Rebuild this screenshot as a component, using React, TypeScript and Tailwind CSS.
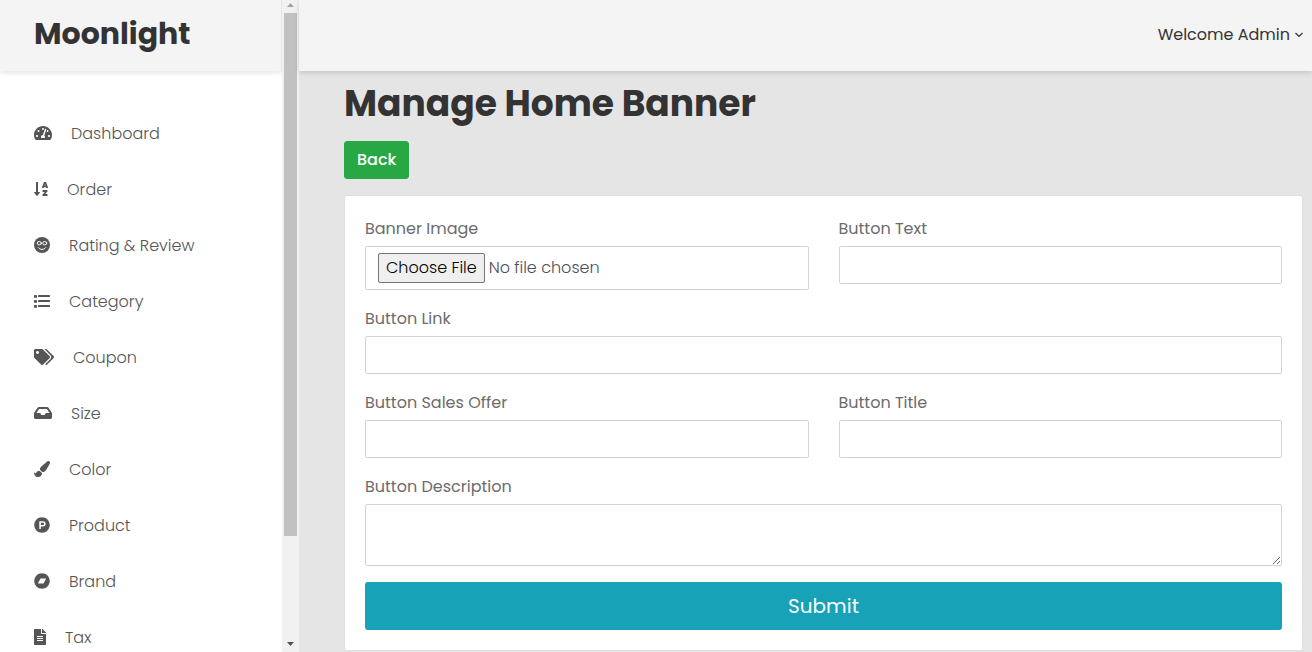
import type { ReactNode } from "react";
import {
  FaTachometerAlt,
  FaSortAlphaDown,
  FaTags,
  FaInbox,
  FaPaintBrush,
  FaProductHunt,
  FaBandcamp,
  FaFileAlt,
} from "react-icons/fa";

function ListIcon({ className }: { className?: string }) {
  return (
    <svg className={className} viewBox="0 0 16 16" fill="currentColor">
      <rect x="0" y="2" width="3" height="2.800" rx="0.400" />
      <rect x="0" y="7" width="3" height="2.800" rx="0.400" />
      <rect x="0" y="12" width="3" height="2.800" rx="0.400" />
      <rect x="4" y="2" width="12" height="2" rx="0.400" />
      <rect x="4" y="7" width="12" height="2" rx="0.400" />
      <rect x="4" y="12" width="12" height="2" rx="0.400" />
    </svg>
  );
}

function FaceIcon({ className }: { className?: string }) {
  return (
    <svg className={className} viewBox="0 0 16 16" fill="none">
      <circle cx="8" cy="8" r="8" fill="currentColor" />
      <g stroke="#fff" strokeWidth="1" strokeLinecap="round">
        <ellipse cx="5.300" cy="6.200" rx="2" ry="1.700" />
        <ellipse cx="10.700" cy="6.200" rx="2" ry="1.700" />
        <path d="M4.300 10.600c1.800 2.500 5.600 2.500 7.400 0" />
      </g>
    </svg>
  );
}

const menu = [
  { label: "Dashboard", icon: FaTachometerAlt, width: "w-[18px]" },
  { label: "Order", icon: FaSortAlphaDown, width: "w-[14px]" },
  { label: "Rating & Review", icon: FaceIcon, width: "w-4" },
  { label: "Category", icon: ListIcon, width: "w-4" },
  { label: "Coupon", icon: FaTags, width: "w-5" },
  { label: "Size", icon: FaInbox, width: "w-[18px]" },
  { label: "Color", icon: FaPaintBrush, width: "w-4" },
  { label: "Product", icon: FaProductHunt, width: "w-4" },
  { label: "Brand", icon: FaBandcamp, width: "w-4" },
  { label: "Tax", icon: FaFileAlt, width: "w-3" },
];

const control =
  "block w-full rounded-[2px] border border-[#ced4da] bg-white px-3 text-[#495057]";

function Field({ id, label, wide, children }: { id: string; label: string; wide?: boolean; children: ReactNode }) {
  return (
    <div className={wide ? "col-span-2" : ""}>
      <label htmlFor={id} className="mb-1 block leading-[26px] text-[#6c6c6c]">
        {label}
      </label>
      {children}
    </div>
  );
}

function Sidebar() {
  return (
    <aside className="flex w-[299px] shrink-0 bg-white">
      <div className="flex min-w-0 flex-1 flex-col overflow-hidden">
        <div className="h-[71px] shrink-0 border-r border-[#e5e5e5] bg-[#f4f4f4] pl-[34px] pt-3 shadow-[0_2px_5px_rgba(0,0,0,0.1)]">
          <a href="#" className="text-3xl font-bold leading-[44px] text-[#333]">
            Moonlight
          </a>
        </div>
        <nav className="pt-[34px]">
          <ul>
            {menu.map(({ label, icon: Icon, width }) => (
              <li key={label}>
                <a href="#" className="flex h-14 items-center gap-[19px] pl-[34px] font-light text-[#555]">
                  <Icon className={`h-4 shrink-0 ${width}`} />
                  <span className="pt-0.5">{label}</span>
                </a>
              </li>
            ))}
          </ul>
        </nav>
      </div>
      <div aria-hidden="true" className="flex w-[17px] shrink-0 flex-col items-center bg-[#f1f1f1]">
        <svg className="h-[13px] w-[7px] shrink-0" viewBox="0 0 7 13" fill="#a3a3a3">
          <path d="M0 7h7L3.5 3z" />
        </svg>
        <div className="w-[13px] flex-[523] bg-[#c1c1c1]" />
        <div className="flex-[99]" />
        <svg className="h-[17px] w-[7px] shrink-0" viewBox="0 0 7 17" fill="#505050">
          <path d="M0 7h7l-3.500 4z" />
        </svg>
      </div>
    </aside>
  );
}

export default function App() {
  return (
    <div className="flex h-screen overflow-hidden bg-[#e5e5e5] font-['Poppins','Inter',sans-serif] text-base text-[#333]">
      <Sidebar />
      <div className="flex min-w-0 flex-1 flex-col">
        <header className="flex h-[71px] shrink-0 items-center justify-end bg-[#f4f4f4] pb-0.5 pr-2 shadow-[0_2px_5px_rgba(0,0,0,0.14)]">
          <button type="button" className="flex items-center gap-1 leading-6">
            Welcome Admin
            <svg className="h-2 w-[10px]" viewBox="0 0 10 8" fill="none" stroke="#333" strokeWidth="1.200">
              <path d="M1.500 2 5 5.500 8.500 2" />
            </svg>
          </button>
        </header>
        <main className="min-h-0 flex-1 overflow-hidden pl-[45px] pr-[9px] pt-2">
          <h1 className="text-4xl font-bold leading-[50px]">Manage Home Banner</h1>
          <button type="button" className="mt-3 h-[38px] rounded-[3px] border border-[#28a745] bg-[#28a745] px-3 font-medium text-white">
            Back
          </button>
          <form className="mt-4 grid grid-cols-2 gap-x-[30px] gap-y-4 rounded-[3px] border border-[#dfdfdf] bg-white p-5" onSubmit={(e) => e.preventDefault()}>
            <Field id="image" label="Banner Image">
              <input
                id="image"
                type="file"
                className={`${control} h-11 py-1.5 font-light file:mr-1 file:h-[30px] file:rounded-[2px] file:border file:border-solid file:border-[#767676] file:bg-[#efefef] file:px-[7px] file:text-black`}
              />
            </Field>
            <Field id="text" label="Button Text">
              <input id="text" type="text" className={`${control} h-[38px]`} />
            </Field>
            <Field id="link" label="Button Link" wide>
              <input id="link" type="text" className={`${control} h-[38px]`} />
            </Field>
            <Field id="offer" label="Button Sales Offer">
              <input id="offer" type="text" className={`${control} h-[38px]`} />
            </Field>
            <Field id="title" label="Button Title">
              <input id="title" type="text" className={`${control} h-[38px]`} />
            </Field>
            <Field id="description" label="Button Description" wide>
              <textarea id="description" className={`${control} h-[62px] resize py-1.5`} />
            </Field>
            <button type="submit" className="col-span-2 h-12 rounded-[3px] bg-[#17a2b8] text-xl text-white">
              Submit
            </button>
          </form>
        </main>
      </div>
    </div>
  );
}
